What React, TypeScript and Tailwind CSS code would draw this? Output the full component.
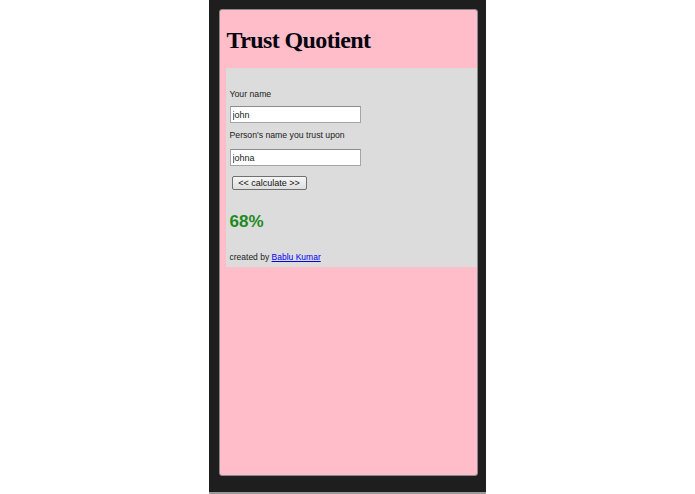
import React from "react";

const sans = { fontFamily: '"Liberation Sans", Arial, sans-serif' };

function Field({ value }: { value: string }) {
  return (
    <input
      readOnly
      value={value}
      className="block h-[17px] w-[131px] border border-[#a5a5a5] border-t-[#8c8c8c] bg-white px-[2px] text-[9px] text-[#222] outline-none"
      style={sans}
    />
  );
}

export default function App() {
  return (
    <div className="flex h-[494px] w-[695px] justify-center bg-white" style={sans}>
      <div className="ml-[-1px] h-[494px] w-[277px] border-b-2 border-[#9a9a9a] bg-[#1e1e1e] pb-[14px] pl-[10px] pr-[8px] pt-[9px]">
        <div className="flex h-[467px] flex-col rounded-[3px] border border-[#8a8a8a] bg-[#ffbdc9]">
          <h1
            className="pb-[14px] pl-[7px] pt-[16px] text-[24px] font-bold leading-[28px] tracking-[-0.6px] text-[#05050f]"
            style={{ fontFamily: '"Liberation Serif", "Times New Roman", serif' }}
          >
            Trust Quotient
          </h1>
          <div className="ml-[6px] flex h-[199px] flex-col bg-[#dcdcdc] pl-[4px] pt-[21px] text-[#222]">
            <label className="text-[8.7px] leading-[11px]">Your name</label>
            <div className="mt-[6px]">
              <Field value="john" />
            </div>
            <label className="mt-[7px] text-[8.7px] leading-[11px]">Person's name you trust upon</label>
            <div className="mt-[8px]">
              <Field value="johna" />
            </div>
            <button className="ml-[2px] mt-[10px] flex h-[14px] w-[75px] items-center justify-center rounded-[2px] border border-[#707070] bg-gradient-to-b from-[#f6f6f6] to-[#dedede] text-[9px] leading-none text-[#111]">
              &lt;&lt; calculate &gt;&gt;
            </button>
            <div className="mt-[22px] text-[17px] font-bold leading-[20px] text-[#1e8a1e]">68%</div>
            <div className="mt-[20px] text-[8.5px] leading-[11px] text-[#222]">
              created by{" "}
              <a href="#" className="text-[#0000ee] underline">
                Bablu Kumar
              </a>
            </div>
          </div>
        </div>
      </div>
    </div>
  );
}
